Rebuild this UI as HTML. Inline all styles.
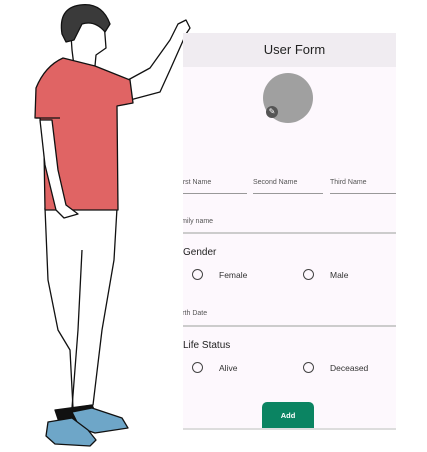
<!DOCTYPE html>
<html><head><style>
*{margin:0;padding:0;box-sizing:border-box}
body{width:427px;height:452px;background:#fff;position:relative;overflow:hidden;font-family:"Liberation Sans",sans-serif;color:#333}
.ph{position:absolute;left:183px;top:33px;width:213px;height:397px;background:#fdf8fd;overflow:hidden}
.hd{height:34px;background:#f0ecf1;text-align:center;line-height:34px;font-size:13px;color:#222;padding-left:10px}
.a{position:absolute}
.lb{font-size:7px;color:#555}
.ln{position:absolute;height:1px;background:#999}
.rd{position:absolute;width:11px;height:11px;border:1.4px solid #444;border-radius:50%}
.t{font-size:8.5px;color:#333}
.h{font-size:10px;color:#222}
</style></head><body>
<svg class="a" style="left:0;top:0" width="200" height="452" viewBox="0 0 200 452">
<g stroke="#111" stroke-width="1.3" stroke-linejoin="round">
<path d="M128 80 L150 68 L170 40 L178 24 L186 20 L190 28 L186 34 L170 70 L160 92 L130 100 Z" fill="#fff"/>
<path d="M70 20 Q85 12 104 22 L106 48 L96 55 L95 66 L74 66 L72 50 Z" fill="#fff"/>
<path d="M62 34 Q58 8 80 5 Q102 2 110 24 L105 32 Q95 20 82 24 L74 40 L66 42 Z" fill="#3a3a3a"/>
<path d="M45 208 L117 208 L114 260 L102 330 L93 405 L73 408 L70 350 L58 330 L48 280 Z" fill="#fff"/>
<path d="M82 250 L78 330 L72 408" fill="none"/>
<path d="M55 410 L92 405 L98 418 L60 425 Z" fill="#111"/>
<path d="M72 412 L92 408 L122 418 L128 428 L95 433 L80 428 Z" fill="#6ea6c8"/>
<path d="M48 422 L72 418 L88 430 L96 440 L90 446 L55 444 L46 436 Z" fill="#6ea6c8"/>
<path d="M63 58 L95 66 L120 76 L130 80 L133 103 L117 106 L118 210 L45 210 L44 150 L40 118 L35 118 L36 88 Q45 66 63 58 Z" fill="#e06464"/>
<path d="M36 118 L60 118" fill="none"/>
<path d="M40 120 L52 120 L58 170 L66 205 L78 214 L64 218 L56 210 L45 165 Z" fill="#fff"/>
</g>
</svg>
<div class="ph">
<div class="hd">User Form</div>
<div class="a" style="left:80px;top:40px;width:50px;height:50px;border-radius:50%;background:#a0a0a0"></div>
<div class="a" style="left:83px;top:73px;width:12px;height:12px;border-radius:50%;background:#555;color:#fff;font-size:8px;line-height:12px;text-align:center">✎</div>
<div class="a lb" style="left:-6px;top:146px">First Name</div>
<div class="a lb" style="left:70px;top:146px">Second Name</div>
<div class="a lb" style="left:147px;top:146px">Third Name</div>
<div class="ln" style="left:0;top:160px;width:64px"></div>
<div class="ln" style="left:70px;top:160px;width:70px"></div>
<div class="ln" style="left:147px;top:160px;width:66px"></div>
<div class="a lb" style="left:-10px;top:185px">Family name</div>
<div class="ln" style="left:0;top:199px;width:213px;height:2px;background:#ccc"></div>
<div class="a h" style="left:0;top:214px">Gender</div>
<div class="rd" style="left:9px;top:236px"></div><div class="a t" style="left:36px;top:237px">Female</div>
<div class="rd" style="left:120px;top:236px"></div><div class="a t" style="left:147px;top:237px">Male</div>
<div class="a lb" style="left:-7px;top:277px">Birth Date</div>
<div class="ln" style="left:0;top:292px;width:213px;height:2px;background:#ccc"></div>
<div class="a h" style="left:0;top:307px">Life Status</div>
<div class="rd" style="left:9px;top:329px"></div><div class="a t" style="left:36px;top:330px">Alive</div>
<div class="rd" style="left:120px;top:329px"></div><div class="a t" style="left:147px;top:330px">Deceased</div>
<div class="a" style="left:79px;top:369px;width:52px;height:28px;background:#0b8462;border-radius:5px 5px 0 0;color:#fff;font-size:7.5px;font-weight:bold;text-align:center;line-height:28px">Add</div>
<div class="ln" style="left:0;top:395px;width:213px;height:2px;background:#ddd"></div>
</div>
</body></html>
